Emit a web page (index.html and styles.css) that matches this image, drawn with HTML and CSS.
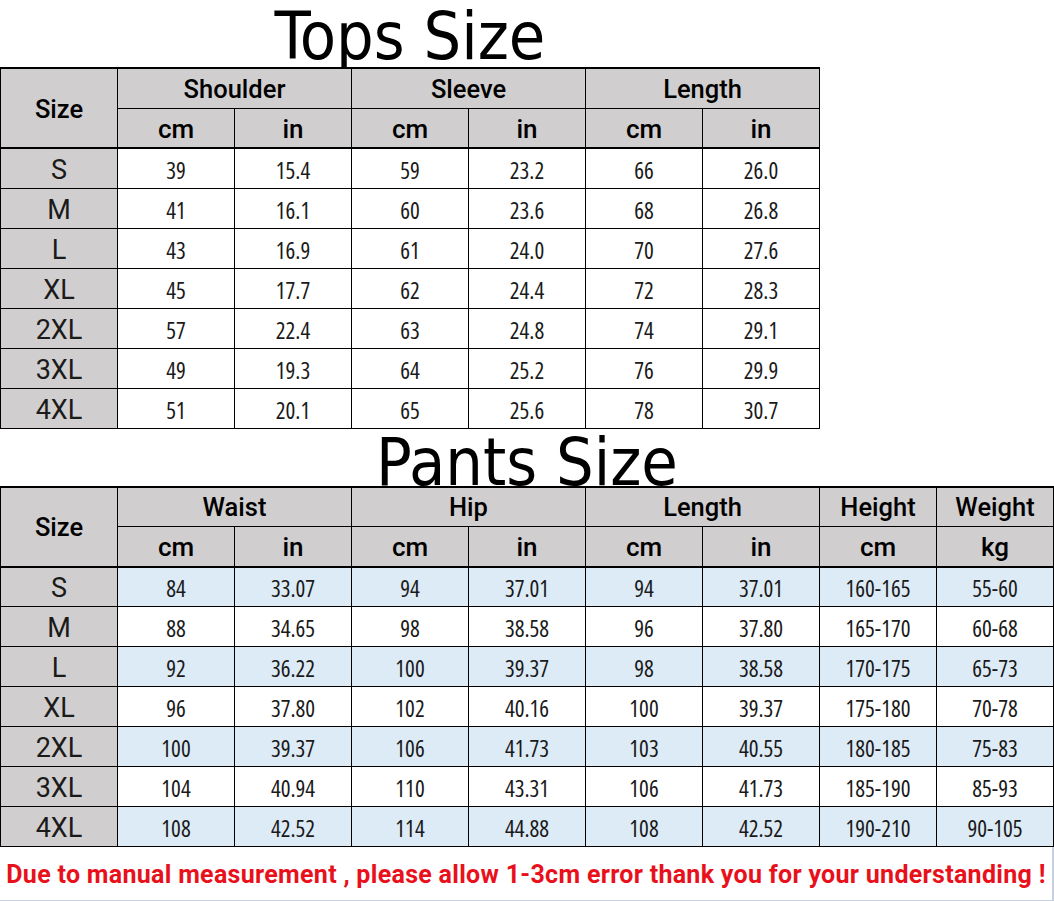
FILE: index.html
```html
<!DOCTYPE html>
<html lang="en">
<head>
<meta charset="utf-8">
<title>Size Chart</title>
<link rel="stylesheet" href="styles.css">
</head>
<body>
<main class="page">
  <section class="chart chart-tops">
    <h1 class="title title-tops">Tops Size</h1>
    <table class="grid">
      <thead>
        <tr class="head-row">
          <th class="size-head" rowspan="2">Size</th>
          <th colspan="2">Shoulder</th>
          <th colspan="2">Sleeve</th>
          <th colspan="2">Length</th>
        </tr>
        <tr class="unit-row">
          <th>cm</th><th>in</th><th>cm</th><th>in</th><th>cm</th><th>in</th>
        </tr>
      </thead>
      <tbody>
        <tr><th>S</th><td>39</td><td>15.4</td><td>59</td><td>23.2</td><td>66</td><td>26.0</td></tr>
        <tr><th>M</th><td>41</td><td>16.1</td><td>60</td><td>23.6</td><td>68</td><td>26.8</td></tr>
        <tr><th>L</th><td>43</td><td>16.9</td><td>61</td><td>24.0</td><td>70</td><td>27.6</td></tr>
        <tr><th>XL</th><td>45</td><td>17.7</td><td>62</td><td>24.4</td><td>72</td><td>28.3</td></tr>
        <tr><th>2XL</th><td>57</td><td>22.4</td><td>63</td><td>24.8</td><td>74</td><td>29.1</td></tr>
        <tr><th>3XL</th><td>49</td><td>19.3</td><td>64</td><td>25.2</td><td>76</td><td>29.9</td></tr>
        <tr><th>4XL</th><td>51</td><td>20.1</td><td>65</td><td>25.6</td><td>78</td><td>30.7</td></tr>
      </tbody>
    </table>
  </section>

  <section class="chart chart-pants">
    <h1 class="title title-pants">Pants Size</h1>
    <table class="grid">
      <thead>
        <tr class="head-row">
          <th class="size-head" rowspan="2">Size</th>
          <th colspan="2">Waist</th>
          <th colspan="2">Hip</th>
          <th colspan="2">Length</th>
          <th>Height</th>
          <th>Weight</th>
        </tr>
        <tr class="unit-row">
          <th>cm</th><th>in</th><th>cm</th><th>in</th><th>cm</th><th>in</th><th>cm</th><th>kg</th>
        </tr>
      </thead>
      <tbody class="striped">
        <tr><th>S</th><td>84</td><td>33.07</td><td>94</td><td>37.01</td><td>94</td><td>37.01</td><td>160-165</td><td>55-60</td></tr>
        <tr><th>M</th><td>88</td><td>34.65</td><td>98</td><td>38.58</td><td>96</td><td>37.80</td><td>165-170</td><td>60-68</td></tr>
        <tr><th>L</th><td>92</td><td>36.22</td><td>100</td><td>39.37</td><td>98</td><td>38.58</td><td>170-175</td><td>65-73</td></tr>
        <tr><th>XL</th><td>96</td><td>37.80</td><td>102</td><td>40.16</td><td>100</td><td>39.37</td><td>175-180</td><td>70-78</td></tr>
        <tr><th>2XL</th><td>100</td><td>39.37</td><td>106</td><td>41.73</td><td>103</td><td>40.55</td><td>180-185</td><td>75-83</td></tr>
        <tr><th>3XL</th><td>104</td><td>40.94</td><td>110</td><td>43.31</td><td>106</td><td>41.73</td><td>185-190</td><td>85-93</td></tr>
        <tr><th>4XL</th><td>108</td><td>42.52</td><td>114</td><td>44.88</td><td>108</td><td>42.52</td><td>190-210</td><td>90-105</td></tr>
      </tbody>
    </table>
    <p class="note">Due to manual measurement , please allow 1-3cm error thank you for your understanding !</p>
  </section>
</main>
</body>
</html>
```
FILE: styles.css
```css
html, body {
  margin: 0;
  padding: 0;
  background: #ffffff;
}

body {
  width: 1054px;
  height: 901px;
  overflow: hidden;
  font-family: Roboto, "Open Sans", sans-serif;
  color: #111111;
}

.page {
  display: flex;
  flex-direction: column;
}

.chart {
  display: flex;
  flex-direction: column;
}

.chart-tops {
  width: 820px;
}

.chart-pants {
  width: 1054px;
}

.title {
  margin: 0;
  text-align: center;
  font-family: "DejaVu Sans Condensed", "DejaVu Sans", sans-serif;
  font-size: 66px;
  font-weight: 400;
  color: #000000;
  white-space: nowrap;
}

.title-tops {
  height: 67px;
  line-height: 74px;
}

.title-pants {
  height: 57px;
  line-height: 68px;
}

.grid {
  width: 100%;
  table-layout: fixed;
  border-collapse: collapse;
  border-top: 2px solid #000;
}

.grid th,
.grid td {
  border: 1px solid #000;
  padding: 3px 0 0 0;
  text-align: center;
  vertical-align: middle;
  white-space: nowrap;
}

.grid tr {
  height: 40px;
}

.grid thead tr.head-row {
  height: 40px;
}

.grid thead tr.unit-row {
  height: 40px;
}

.grid thead th {
  background: #d0cece;
  font-family: Roboto, sans-serif;
  font-size: 25.5px;
  font-weight: 500;
  color: #000;
}

.grid thead .unit-row th {
  font-size: 26px;
  padding-top: 2px;
  border-bottom: 2px solid #000;
}

.grid thead .head-row th {
  padding-top: 1px;
}

.grid thead .size-head {
  border-bottom: 2px solid #000;
  padding-top: 2px;
}

.grid tbody th {
  background: #d0cece;
  font-family: Roboto, sans-serif;
  font-size: 27px;
  font-weight: 400;
  color: #1a1a1a;
}

.grid tbody td {
  font-family: "Open Sans", sans-serif;
  font-size: 23px;
  font-weight: 400;
  font-stretch: 75%;
  color: #1a1a1a;
  background: #ffffff;
}

.striped tr:nth-child(odd) td {
  background: #ddebf7;
}

.note {
  margin: 0;
  height: 53px;
  line-height: 56px;
  text-align: center;
  font-family: Roboto, sans-serif;
  font-size: 25px;
  font-weight: 700;
  letter-spacing: 0.3px;
  color: #e8111b;
  white-space: nowrap;
  border-right: 2px solid #c8d0df;
  border-bottom: 2px solid #c8d0df;
}
```
